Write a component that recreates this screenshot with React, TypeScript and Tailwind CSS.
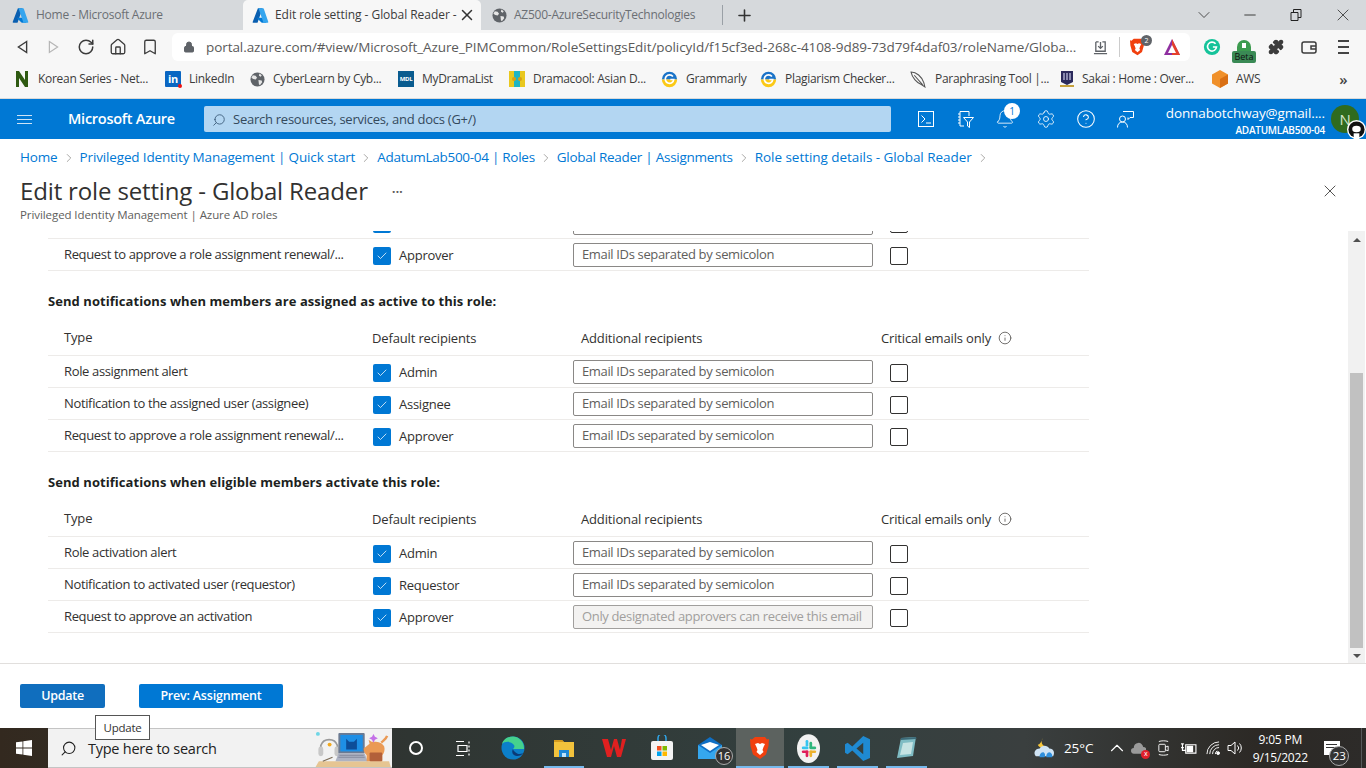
import React from "react";
import { ChevronDown, Minus, X, Plus, RotateCw, Home, Bookmark, Lock, Search, Bell, Settings, HelpCircle, Puzzle, ChevronRight, ChevronUp, Check, Info } from "lucide-react";

const Azure = () => (
  <svg viewBox="0 0 96 96" className="w-[17px] h-[17px] shrink-0">
    <path d="M33.34 6.54h26.04L32.35 86.64a4.15 4.15 0 0 1-3.94 2.82H8.15a4.15 4.15 0 0 1-3.93-5.48z" fill="#0a5fb0" />
    <path d="M71.17 60.26H29.88a1.91 1.91 0 0 0-1.3 3.31l26.53 24.76a4.17 4.17 0 0 0 2.85 1.13h23.38z" fill="#0078d4" />
    <path d="M66.6 9.36a4.15 4.15 0 0 0-3.93-2.82H33.65a4.15 4.15 0 0 1 3.93 2.82l25.18 74.62a4.15 4.15 0 0 1-3.93 5.48h29.02a4.15 4.15 0 0 0 3.93-5.48z" fill="#35a5ee" />
  </svg>
);
const Globe = () => (
  <svg viewBox="0 0 16 16" className="w-[15px] h-[15px] shrink-0">
    <circle cx="8" cy="8" r="7.5" fill="#5f6368" />
    <path d="M3 3.5l3 .5 1.5 2-1.5 2-2.5-.5L1.5 6zM10 1.5l2.5 2-1 1.5-2-1zM9 8.500l3.500.5.5 2-2.500 3-1-1z" fill="#e6e6e6" />
  </svg>
);
const BraveIcon = ({ s = 18 }: { s?: number }) => (
  <svg viewBox="0 0 20 24" style={{ width: s, height: s * 1.2 }} className="shrink-0">
    <path d="M5 1h10l2 2.500 2-.5-.5 7-2.500 8.500L10 23 3 18.500.5 10 0 3l2 .5z" fill="#f1400f" />
    <path d="M5 8l3-1 2 1 2-1 3 1-1.500 3-1 3 1 2L10 19l-3.500-3 1-2-1-3z" fill="#fff" />
  </svg>
);
const G = ({ c = "#15c39a" }: { c?: string }) => (
  <svg viewBox="0 0 20 20" className="w-[18px] h-[18px] shrink-0">
    <circle cx="10" cy="10" r="9" fill={c} />
    <path d="M14 6.500A5 5 0 1 0 15 10h-4" fill="none" stroke="#fff" strokeWidth="1.800" />
  </svg>
);
const GPlag = () => (
  <svg viewBox="0 0 20 20" className="w-[17px] h-[17px] shrink-0">
    <path d="M1 10a9 9 0 0 1 18 0z" fill="#1a73c8" />
    <path d="M1 10a9 9 0 0 0 18 0z" fill="#fbc916" />
    <path d="M14 6.500A5 5 0 1 0 15 10h-4" fill="none" stroke="#fff" strokeWidth="2" />
  </svg>
);

const bookmarks: [number, React.ReactNode, string][] = [
  [151, <svg viewBox="0 0 16 18" className="w-[16px] h-[18px] shrink-0"><path d="M2 1h3l6 9V1h3v16h-3L5 8v9H2z" fill="#2f5a12" /></svg>, "Korean Series - Net..."],
  [85, <div className="w-[16px] h-[16px] bg-[#0a66c2] text-white text-[11px] font-bold leading-[16px] text-center shrink-0 relative rounded-[1px]">in<span className="absolute right-[-1px] bottom-[-1px] w-[4px] h-[4px] bg-[#e11] rounded-full" /></div>, "LinkedIn"],
  [148, <Globe />, "CyberLearn by Cyb..."],
  [111, <div className="w-[16px] h-[16px] bg-[#0a5c8f] text-white text-[6px] font-bold leading-[16px] text-center shrink-0">MDL</div>, "MyDramaList"],
  [152, <svg viewBox="0 0 16 16" className="w-[16px] h-[16px] shrink-0"><rect width="16" height="16" fill="#1fb5c4" /><path d="M0 0h5v16H0zM11 0h5v16h-5z" fill="#e9c81e" /><circle cx="5" cy="8" r="2" fill="#d8a013" /><circle cx="11" cy="8" r="2" fill="#d8a013" /></svg>, "Dramacool: Asian D..."],
  [99, <GPlag />, "Grammarly"],
  [150, <GPlag />, "Plagiarism Checker..."],
  [150, <svg viewBox="0 0 16 16" className="w-[17px] h-[17px] shrink-0" fill="none" stroke="#555" strokeWidth="1"><path d="M1 1c5 0 10 4 12 10l1 4-3-2C6 11 2 6 1 1zM4 4l8 9" /></svg>, "Paraphrasing Tool |..."],
  [152, <svg viewBox="0 0 14 18" className="w-[14px] h-[18px] shrink-0"><path d="M1 1h12v11l-6 3-6-3z" fill="#2b2a5c" /><path d="M3 3h2v7H3zM6 3h2v7H6zM9 3h2v7H9z" fill="#8a8ab0" /><path d="M0 15h14v2H0z" fill="#c6a13b" /></svg>, "Sakai : Home : Over..."],
  [0, <svg viewBox="0 0 16 18" className="w-[16px] h-[18px] shrink-0"><path d="M8 0l8 4.500v9L8 18l-8-4.500v-9z" fill="#f0902a" /><path d="M8 9l8-4.500v9L8 18z" fill="#d96f14" /></svg>, "AWS"],
];

const ChkBlue = () => (
  <div className="w-[18px] h-[18px] bg-[#0078d4] rounded-[2px] flex items-center justify-center shrink-0">
    <Check className="w-[12px] h-[12px] text-white" strokeWidth={1.500} />
  </div>
);
const ChkEmpty = () => <div className="w-[18px] h-[18px] border border-[#323130] rounded-[2px] shrink-0" />;

const Row = ({ type, who, disabled, blank }: { type: string; who: string; disabled?: boolean; blank?: boolean }) => (
  <div className="w-[1041px] ml-[48px] h-[32px] pt-[2px] border-b border-[#edebe9] flex items-center text-[13px] text-[#323130] shrink-0 tracking-[-0.35px]">
    <div className="w-[325px] pl-[16px] mb-[2px] whitespace-nowrap">{type}</div>
    <div className="w-[200px] flex items-center gap-[8px]"><ChkBlue /><span className="tracking-[-0.25px]">{who}</span></div>
    <div className="w-[317px]">
      {disabled ? (
        <div className="w-[300px] h-[24px] border border-[#a19f9d] rounded-[2px] bg-[#f3f2f1] text-[#a19f9d] px-[8px] leading-[21px] mb-[1px] whitespace-nowrap">Only designated approvers can receive this email</div>
      ) : (
        <div className="w-[300px] h-[24px] border border-[#8a8886] rounded-[2px] bg-white text-[#605e5c] px-[8px] leading-[21px] mb-[1px]">{blank ? "" : "Email IDs separated by semicolon"}</div>
      )}
    </div>
    <ChkEmpty />
  </div>
);

const Section = ({ title, rows }: { title: string; rows: [string, string, boolean?][] }) => (
  <>
    <div className="ml-[48px] pt-[20px] h-[41px] text-[13px] leading-[20px] font-bold text-[#201f1e] whitespace-nowrap shrink-0 tracking-[0.06px]">{title}</div>
    <div className="ml-[48px] w-[1041px] h-[44px] border-b border-[#edebe9] flex items-end pb-[6px] text-[13px] leading-[20px] font-medium text-[#323130] shrink-0 tracking-[-0.15px]">
      <div className="w-[324px] pl-[16px] pb-[2px]">Type</div>
      <div className="w-[209px] pb-[1px]">Default recipients</div>
      <div className="w-[300px] pb-[1px]">Additional recipients</div>
      <div className="flex items-center gap-[7px] pb-[1px]">Critical emails only <Info className="w-[14px] h-[14px] text-[#605e5c]" strokeWidth={1.500} /></div>
    </div>
    {rows.map((r) => <Row key={r[0]} type={r[0]} who={r[1]} disabled={r[2]} />)}
  </>
);

const crumbs: [string, string][] = [
  ["Home", "tracking-[-0.15px]"],
  ["Privileged Identity Management | Quick start", "tracking-[-0.15px]"],
  ["AdatumLab500-04 | Roles", "tracking-[-0.28px]"],
  ["Global Reader | Assignments", "tracking-[-0.27px]"],
  ["Role setting details - Global Reader", "tracking-[-0.05px]"],
];

const TaskIcon = ({ children, w = 49, active, line }: { children: React.ReactNode; w?: number; active?: boolean; line?: boolean }) => (
  <div style={{ width: w }} className={`h-[40px] flex items-center justify-center relative shrink-0 ${active ? "bg-[#5c625f]" : ""}`}>
    {children}
    {line && <span className={`absolute bottom-0 h-[2px] bg-[#76b9ed] ${active ? "left-0 right-0" : "left-[4px] right-[4px]"}`} />}
  </div>
);

export default function App() {
  return (
    <div className="w-[1366px] h-[768px] overflow-hidden flex flex-col bg-white relative font-['Open_Sans','Noto_Sans',sans-serif] tracking-[-0.25px]">
      {/* tab strip */}
      <div className="h-[30px] bg-[#d6d9dc] flex items-center shrink-0">
        <div className="w-[243px] h-[30px] flex items-center shrink-0 pl-[12px] text-[#6b6f74]">
          <Azure />
          <span className="ml-[7px] text-[12px] whitespace-nowrap">Home - Microsoft Azure</span>
        </div>
        <div className="w-[238px] h-[30px] flex items-center shrink-0 bg-[#f7f7f7] rounded-t-[5px] pl-[9px] text-[#3c3c3c]">
          <Azure />
          <span className="ml-[6px] w-[186px] text-[12px] whitespace-nowrap overflow-hidden tracking-[-0.05px]">Edit role setting - Global Reader -</span>
          <X className="w-[18px] h-[18px] -ml-[3px] text-[#333]" strokeWidth={2} />
        </div>
        <div className="w-[241px] h-[30px] flex items-center shrink-0 pl-[11px] text-[#6b6f74]">
          <Globe />
          <span className="ml-[7px] text-[12px] whitespace-nowrap">AZ500-AzureSecurityTechnologies</span>
        </div>
        <div className="w-px h-[20px] bg-[#9aa0a6] shrink-0" />
        <Plus className="w-[19px] h-[19px] ml-[12px] text-[#333]" strokeWidth={2} />
        <div className="ml-auto flex items-center text-[#333]">
          <ChevronDown className="w-[20px] h-[20px] mr-[27px]" strokeWidth={1} />
          <Minus className="w-[18px] h-[18px] mr-[31px]" strokeWidth={1.250} />
          <svg viewBox="0 0 12 12" className="w-[12px] h-[12px] mr-[31px]" fill="none" stroke="#222" strokeWidth="1"><path d="M1 3.500h7v8H1zM3.500 3.500V.5h7.500v8H8" /></svg>
          <X className="w-[20px] h-[20px] mr-[13px]" strokeWidth={1} />
        </div>
      </div>
      {/* toolbar */}
      <div className="h-[34px] bg-[#f7f7f7] flex items-center shrink-0 relative">
        <svg viewBox="0 0 12 14" className="w-[11px] h-[14px] ml-[17px] shrink-0" fill="none" stroke="#3c3c3c" strokeWidth="1.500"><path d="M10.500 1L1.500 7l9 6z" /></svg>
        <svg viewBox="0 0 12 14" className="w-[11px] h-[14px] ml-[20px] shrink-0" fill="none" stroke="#b5b5b5" strokeWidth="1.300"><path d="M1.500 1l9 6-9 6z" /></svg>
        <RotateCw className="w-[18px] h-[18px] ml-[18px] text-[#3c3c3c] shrink-0" strokeWidth={2} />
        <Home className="w-[18px] h-[18px] ml-[14px] text-[#3c3c3c] shrink-0" strokeWidth={1.750} />
        <Bookmark className="w-[18px] h-[18px] ml-[14px] text-[#3c3c3c] shrink-0" strokeWidth={1.750} />
        <div className="ml-[13px] w-[1018px] h-[28px] bg-white rounded-[6px] flex items-center pl-[11px] shrink-0">
          <Lock className="w-[12px] h-[12px] text-[#5f6368] fill-[#5f6368] shrink-0" strokeWidth={2} />
          <span className="ml-[11px] text-[13.500px] text-[#5a5a5a] whitespace-nowrap tracking-[-0.07px]">portal.azure.com/#view/Microsoft_Azure_PIMCommon/RoleSettingsEdit/policyId/f15cf3ed-268c-4108-9d89-73d79f4daf03/roleName/Globa...</span>
          <div className="ml-auto flex items-center shrink-0">
            <svg viewBox="0 0 16 16" className="w-[15px] h-[15px] shrink-0" fill="none" stroke="#5f6368" strokeWidth="1.400"><path d="M3 2h3M10 2h3v10H3V2M8 2v7M5.500 6.500L8 9l2.500-2.500M1 14.500h14" /></svg>
            <span className="w-px h-[20px] bg-[#ccc] ml-[11px]" />
            <div className="ml-[10px] relative"><BraveIcon s={15} /><span className="absolute top-[-3px] left-[11px] w-[11px] h-[11px] rounded-full bg-[#5f6368] text-white text-[7px] leading-[11px] text-center">2</span></div>
            <svg viewBox="0 0 18 18" className="w-[18px] h-[18px] ml-[18px] mr-[9px] shrink-0"><path d="M9 1l8 16H1z" fill="#8f2fa0" /><path d="M9 1l8 16H9z" fill="#e5402b" /><path d="M9 7l4 8H5z" fill="#fff" /></svg>
          </div>
        </div>
        <div className="ml-[13px]"><G /></div>
        <div className="ml-[14px] relative w-[18px] h-[18px] shrink-0">
          <svg viewBox="0 0 18 18" className="w-[18px] h-[18px]"><path d="M2 16V9a7 7 0 0 1 14 0v7z" fill="#3c9b4f" /><rect x="7" y="5" width="4" height="5" fill="#fff" /></svg>
          <span className="absolute top-[13px] left-[-3px] w-[24px] h-[12px] bg-[#3a8a55] text-[#111] text-[9px] leading-[12px] text-center rounded-[2px] tracking-normal">Beta</span>
        </div>
        <Puzzle className="w-[16px] h-[16px] ml-[15px] text-[#3c3c3c] fill-[#3c3c3c] shrink-0" />
        <svg viewBox="0 0 16 16" className="w-[16px] h-[16px] ml-[17px] shrink-0" fill="none" stroke="#3c3c3c" strokeWidth="1.500"><rect x="1" y="3" width="14" height="11" rx="2" /><path d="M15 7h-5v3h5" /></svg>
        <div className="ml-[21px] w-[11px] flex flex-col gap-[4px] shrink-0"><span className="h-[2px] bg-[#444]" /><span className="h-[2px] bg-[#444]" /><span className="h-[2px] bg-[#444]" /></div>
      </div>
      {/* bookmarks */}
      <div className="h-[30px] bg-[#f7f7f7] border-b border-[#dadada] flex items-center pl-[14px] pb-[4px] shrink-0 box-content">
        {bookmarks.map(([w, ic, t]) => (
          <div key={t} style={w ? { width: w } : undefined} className="flex items-center gap-[8px] text-[12px] text-[#3c3c3c] whitespace-nowrap shrink-0 tracking-[-0.3px]">
            {ic}<span>{t}</span>
          </div>
        ))}
        <span className="ml-[79px] text-[15px] text-[#444] font-semibold leading-none">»</span>
      </div>
      {/* Azure header */}
      <div className="h-[40px] bg-[#0078d4] flex items-center text-white shrink-0 relative">
        <div className="ml-[17px] w-[15px] flex flex-col gap-[3px] shrink-0"><span className="h-px bg-[#cfe4f6]" /><span className="h-px bg-[#cfe4f6]" /><span className="h-px bg-[#cfe4f6]" /></div>
        <span className="ml-[36px] w-[136px] text-[14.500px] font-semibold whitespace-nowrap">Microsoft Azure</span>
        <div className="w-[687px] h-[26px] bg-[#b3d6f2] rounded-[2px] flex items-center pl-[8px] pt-[1px] text-[#323130] text-[13px] shrink-0">
          <Search className="w-[14px] h-[14px] -scale-x-100 text-[#3a5a78]" strokeWidth={1.500} />
          <span className="ml-[7px] text-[#34495c]">Search resources, services, and docs (G+/)</span>
        </div>
        <svg viewBox="0 0 16 16" className="w-[16px] h-[16px] ml-[27px] shrink-0" fill="none" stroke="#fff" strokeWidth="1"><rect x=".5" y=".5" width="15" height="15" /><path d="M3.500 4.500L7 8l-3.500 3.500M8 12h5" /></svg>
        <svg viewBox="0 0 17 17" className="w-[17px] h-[17px] ml-[23px] shrink-0" fill="none" stroke="#fff" strokeWidth="1"><path d="M3 .5h9V5M3 .5V15h4M1 3h2M1 6h2M1 9h2M1 12h2M6.500 6.500h10l-4 4.500v5.500l-2-1.500v-4z" /></svg>
        <div className="ml-[21px] relative shrink-0">
          <Bell className="w-[20px] h-[20px]" strokeWidth={1} />
          <span className="absolute top-[-6px] left-[9px] w-[16px] h-[16px] rounded-full bg-white text-[#0078d4] text-[10px] leading-[16px] text-center">1</span>
        </div>
        <Settings className="w-[20px] h-[20px] ml-[21px] shrink-0" strokeWidth={1} />
        <HelpCircle className="w-[20px] h-[20px] ml-[20px] shrink-0" strokeWidth={1.250} />
        <svg viewBox="0 0 17 17" className="w-[17px] h-[17px] ml-[21px] shrink-0" fill="none" stroke="#fff" strokeWidth="1"><circle cx="5.500" cy="8" r="3" /><path d="M.5 16.500c0-3.500 2-5.500 5-5.500s5 2 5 5.500M6 .5h10.500v6H13l-2 2v-2" /></svg>
        <div className="ml-[27px] w-[164px] text-right shrink-0 pt-[2px]">
          <div className="text-[13.500px] leading-[18px] whitespace-nowrap tracking-[-0.1px]">donnabotchway@gmail....</div>
          <div className="text-[10px] leading-[14px] font-semibold whitespace-nowrap mt-[1px]">ADATUMLAB500-04</div>
        </div>
        <div className="ml-[6px] w-[28px] h-[28px] rounded-full bg-[#2f6b1f] text-[#d5e6cc] text-[15px] text-center leading-[28px] shrink-0">N</div>
        <svg viewBox="0 0 20 20" className="absolute right-0 bottom-0 w-[19px] h-[19px]">
          <circle cx="10" cy="10" r="10" fill="#fff" />
          <circle cx="10" cy="10" r="8.500" fill="#111" />
          <ellipse cx="10" cy="9.500" rx="4.500" ry="3.500" fill="#fff" />
          <path d="M7 14h6v6H7z" fill="#fff" />
        </svg>
      </div>
      {/* blade header */}
      <div className="h-[92px] shrink-0 relative">
        <div className="h-[37px] pl-[20px] flex items-center text-[13.500px] text-[#0078d4] whitespace-nowrap">
          {crumbs.map(([c, t]) => (
            <React.Fragment key={c}>
              <span className={t}>{c}</span>
              <ChevronRight className="w-[14px] h-[14px] text-[#8a8886] mx-[4px]" strokeWidth={1.250} />
            </React.Fragment>
          ))}
        </div>
        <div className="h-[30px] pl-[20px] flex items-center">
          <span className="text-[24px] font-normal text-[#323130] leading-[30px] whitespace-nowrap tracking-[-0.15px]">Edit role setting - Global Reader</span>
          <span className="ml-[24px] mt-[2px] text-[#605e5c] text-[14px] font-semibold leading-[12px]">···</span>
          <X className="absolute right-[26px] top-[42px] w-[20px] h-[20px] text-[#323130]" strokeWidth={1} />
        </div>
        <div className="pl-[20px] mt-[1px] text-[11.500px] leading-[16px] text-[#605e5c] whitespace-nowrap tracking-[-0.08px]">Privileged Identity Management | Azure AD roles</div>
      </div>
      {/* scrolling content */}
      <div className="h-[432px] flex overflow-hidden shrink-0 relative">
        <div className="flex-1 flex flex-col overflow-hidden min-w-0">
          <div className="-mt-[24px] flex flex-col">
            <Row type="" who="" blank />
            <Row type="Request to approve a role assignment renewal/..." who="Approver" />
            <Section
              title="Send notifications when members are assigned as active to this role:"
              rows={[["Role assignment alert", "Admin"], ["Notification to the assigned user (assignee)", "Assignee"], ["Request to approve a role assignment renewal/...", "Approver"]]}
            />
            <Section
              title="Send notifications when eligible members activate this role:"
              rows={[["Role activation alert", "Admin"], ["Notification to activated user (requestor)", "Requestor"], ["Request to approve an activation", "Approver", true]]}
            />
          </div>
        </div>
        <div className="w-[17px] mr-px bg-[#f1f1f1] flex flex-col items-center shrink-0">
          <div className="h-[18px] flex items-center justify-center"><div className="w-0 h-0 border-x-[4px] border-x-transparent border-b-[4px] border-b-[#505050]" /></div>
          <div className="w-[13px] h-[275px] mt-[124px] bg-[#c1c1c1]" />
          <div className="mt-auto h-[15px] flex items-center justify-center"><div className="w-0 h-0 border-x-[4px] border-x-transparent border-t-[4px] border-t-[#505050]" /></div>
        </div>
      </div>
      {/* footer */}
      <div className="h-[65px] border-t border-[#e1dfdd] flex items-start pt-[20px] pl-[20px] gap-[34px] shrink-0">
        <button className="w-[85px] h-[24px] bg-[#106ebe] text-white text-[12.500px] font-semibold rounded-[2px]">Update</button>
        <button className="w-[144px] h-[24px] bg-[#0078d4] text-white text-[12.500px] font-semibold rounded-[2px] tracking-[-0.2px]">Prev: Assignment</button>
      </div>
      {/* taskbar */}
      <div className="h-[40px] flex items-center shrink-0 text-white relative bg-[linear-gradient(90deg,#33291f_0%,#2f3532_30%,#33403f_60%,#3a3f3f_75%,#2c2925_92%,#2d2b29_100%)]">
        <div className="w-[48px] h-[40px] flex items-center justify-center shrink-0">
          <svg viewBox="0 0 16 16" className="w-[16px] h-[16px]" fill="#fff"><path d="M0 2.300l6.500-.9v6.200H0zM7.300 1.300L16 0v7.600H7.300zM0 8.400h6.500v6.200L0 13.700zM7.300 8.400H16V16l-8.700-1.200z" /></svg>
        </div>
        <div className="w-[344px] h-[40px] bg-[#f2f2f2] border-y border-[#c4c4c4] flex items-center pl-[12px] relative shrink-0 overflow-hidden">
          <Search className="w-[17px] h-[17px] -scale-x-100 text-[#222]" strokeWidth={1.500} />
          <span className="ml-[11px] pt-[1px] text-[14.500px] text-[#222] whitespace-nowrap tracking-[-0.25px]">Type here to search</span>
          <svg viewBox="0 0 78 40" className="absolute right-0 top-0 w-[78px] h-[39px]">
            <path d="M4 33h72l2 7H0z" fill="#e6c592" />
            <circle cx="3" cy="5" r="2" fill="#6fd6e6" />
            <path d="M6 24v-7a9 9 0 0 1 17 0v7" fill="none" stroke="#9a9a9a" strokeWidth="1.800" />
            <rect x="3.500" y="18" width="5" height="10" rx="2.500" fill="#c8c8c8" />
            <rect x="20" y="18" width="5" height="10" rx="2.500" fill="#c8c8c8" />
            <circle cx="15" cy="16" r="2" fill="#f2a91e" />
            <path d="M8 33l10-4" stroke="#7a6a55" strokeWidth="1.200" />
            <rect x="24" y="4" width="27" height="21" rx="1" fill="#6b7a92" />
            <rect x="26" y="6" width="23" height="17" fill="#1e8fe6" />
            <path d="M32 21V10l3 3h5l3-3v11z" fill="#0d4d99" />
            <path d="M24 25h27l3 8H21z" fill="#adb2c2" />
            <path d="M25 27h25M24 29h27" stroke="#7b8094" strokeWidth=".8" />
            <path d="M50 20l6-5-1-4 3 2h3c4 0 8 1 10 5 1 3 0 7-2 9v6H53v-6c-2-2-3-4-3-7z" fill="#ea9a55" />
            <path d="M68 14c3-3 5-4 6-7" fill="none" stroke="#ea9a55" strokeWidth="2.500" />
            <path d="M60 5l1.500 3 3 1.500-3 1.500L60 14l-1.500-3-3-1.500 3-1.500z" fill="#c470e8" />
            <rect x="56" y="24" width="13" height="9" rx="1" fill="#b2603a" />
          </svg>
        </div>
        <TaskIcon w={48}><span className="w-[14px] h-[14px] rounded-full border-[2.500px] border-white" /></TaskIcon>
        <TaskIcon w={46}><svg viewBox="0 0 16 16" className="w-[16px] h-[17px]" fill="none" stroke="#fff" strokeWidth="1.200"><path d="M1 1h8M1 15h8M3 5h9v6H3zM14 1v2M14 5v2M14 9v2M14 13v2" /></svg></TaskIcon>
        <TaskIcon w={54}><svg viewBox="0 0 24 24" className="w-[24px] h-[24px]"><circle cx="12" cy="12" r="11.500" fill="#0c7fc9" /><path d="M23 12C23 5 17 .5 12 .5 6 .5 2 4 1 8c3-3 9-3 12 1 1 2 0 3-1 4h11z" fill="#45d18d" /><path d="M12 13c-2 3 0 7 4 7 3 0 5-1 6-3-3 2-6 1-8-1-1-1-2-2-2-3z" fill="#0b3a77" /></svg></TaskIcon>
        <TaskIcon w={48} line><svg viewBox="0 0 22 22" className="w-[22px] h-[22px]"><path d="M1 3h8l2 2h10v15H1z" fill="#f2c23c" /><path d="M1 3h8l2 2H1z" fill="#d49a1e" /><rect x="6" y="13" width="10" height="7" fill="#1f88d8" /><rect x="9" y="16" width="4" height="4" fill="#bfe3fb" /></svg></TaskIcon>
        <TaskIcon w={52}><svg viewBox="0 0 24 20" className="w-[24px] h-[20px]"><path d="M0 1h6l3 11 3-11h3l3 11 2-11h4l-5 18h-4l-3-11-3 11H5z" fill="#e02020" /></svg></TaskIcon>
        <TaskIcon w={44}><svg viewBox="0 0 22 26" className="w-[22px] h-[26px]"><path d="M7 6V3a4 4 0 0 1 8 0v3" fill="none" stroke="#2fa5e8" strokeWidth="1.500" /><rect x="0" y="6" width="22" height="19" rx="2" fill="#f4f4f4" /><rect x="6" y="11" width="4.500" height="4.500" fill="#f25022" /><rect x="11.500" y="11" width="4.500" height="4.500" fill="#7fba00" /><rect x="6" y="16.500" width="4.500" height="4.500" fill="#00a4ef" /><rect x="11.500" y="16.500" width="4.500" height="4.500" fill="#ffb900" /></svg></TaskIcon>
        <TaskIcon w={52}>
          <svg viewBox="0 0 24 22" className="w-[24px] h-[22px]"><path d="M0 8l12-8 12 8v14H0z" fill="#0f6fc4" /><path d="M0 8l12 8 12-8v14H0z" fill="#35a7ee" /><path d="M3 8l9 6 9-6-9-3z" fill="#fff" /></svg>
          <span className="absolute left-[31px] top-[19px] w-[18px] h-[18px] rounded-full bg-[#333] border border-[#aaa] text-[11px] text-center leading-[16px] tracking-normal">16</span>
        </TaskIcon>
        <TaskIcon w={48} active line><BraveIcon s={20} /></TaskIcon>
        <TaskIcon w={49} line><svg viewBox="0 0 24 30" className="w-[23px] h-[29px]"><ellipse cx="12" cy="15" rx="12" ry="15" fill="#f2f2f2" /><rect x="9" y="6" width="2.800" height="7" rx="1.400" fill="#36c5f0" /><rect x="5" y="13" width="7" height="2.800" rx="1.400" fill="#36c5f0" /><rect x="13" y="8" width="2.800" height="7" rx="1.400" fill="#2eb67d" /><rect x="13" y="13" width="7" height="2.800" rx="1.400" fill="#2eb67d" /><rect x="5" y="17" width="7" height="2.800" rx="1.400" fill="#e01e5a" /><rect x="9" y="17" width="2.800" height="7" rx="1.400" fill="#e01e5a" /><rect x="13" y="17" width="7" height="2.800" rx="1.400" fill="#ecb22e" /><rect x="13" y="17" width="2.800" height="7" rx="1.400" fill="#ecb22e" /></svg></TaskIcon>
        <TaskIcon w={49} line><svg viewBox="0 0 24 24" className="w-[25px] h-[25px]"><path d="M17.500 0L24 3v18l-6.500 3L7 14l-4.500 3.500L0 16V8l2.500-1.500L7 10zM17.500 6.500L11 12l6.500 5.500z" fill="#1f8ad2" /></svg></TaskIcon>
        <TaskIcon w={49} line><svg viewBox="0 0 24 24" className="w-[24px] h-[24px]"><path d="M6 2l15-1-3 19-16 2z" fill="#7fbcc4" /><path d="M6 2l15-1 .5 2-15.500 1z" fill="#3c6a78" /><path d="M8 7l10-1-2 12-11 1z" fill="#c6e3e3" /></svg></TaskIcon>
        <svg viewBox="0 0 24 24" className="w-[23px] h-[23px] ml-[102px] shrink-0"><path d="M10 1c-2 4-1 8 4 9-3 2-8 1-9-2 2 0 4-3 5-7z" fill="#f6c63a" /><path d="M3 20c-3-3-1-8 4-8 2-4 8-4 10 0 5 0 6 5 4 8z" fill="#cfe3f4" /><path d="M7 21a4 4 0 0 1 4-5 4 4 0 0 1 1 5zM14 21a4 4 0 0 1 3-5 4 4 0 0 1 3 5z" fill="#2f8fdc" /></svg>
        <span className="ml-[8px] text-[13.500px] tracking-[-0.1px] shrink-0">25°C</span>
        <ChevronUp className="w-[22px] h-[22px] ml-[13px] shrink-0" strokeWidth={1.250} />
        <div className="ml-[3px] w-[15px] h-[13px] relative shrink-0">
          <svg viewBox="0 0 16 13" className="w-[15px] h-[13px]"><path d="M3 12a3 3 0 0 1 0-6 5 5 0 0 1 10-1 3.500 3.500 0 0 1 0 7z" fill="#9a9a9a" /></svg>
          <span className="absolute right-[-4px] bottom-[-4px] w-[9px] h-[9px] rounded-full bg-[#e0202a] text-white text-[7px] leading-[8px] text-center tracking-normal">x</span>
        </div>
        <svg viewBox="0 0 14 20" className="w-[13px] h-[20px] ml-[11px] shrink-0" fill="none" stroke="#fff" strokeWidth="1"><path d="M2 3c3-1 7-1 10 0M2 17c3 1 7 1 10 0" /><rect x="2" y="6" width="7" height="8" rx="1" /><path d="M9 9l3-1v5l-3-1" /></svg>
        <svg viewBox="0 0 18 14" className="w-[17px] h-[13px] ml-[10px] shrink-0" fill="none" stroke="#fff" strokeWidth="1.200"><path d="M6 3h11v9H6zM1 2h3M1 6h3M2.500 2v4M2.500 6v3h3" /><rect x="7" y="4" width="7" height="7" fill="#fff" stroke="none" /></svg>
        <svg viewBox="0 0 15 15" className="w-[14px] h-[14px] ml-[9px] shrink-0" fill="none" stroke="#fff" strokeWidth="1"><path d="M1 14A13 13 0 0 1 14 1M4 14A10 10 0 0 1 14 4M7 14a7 7 0 0 1 7-7M10 14a4 4 0 0 1 2-3.500" /><circle cx="13" cy="13" r="1.500" fill="#fff" /></svg>
        <svg viewBox="0 0 16 16" className="w-[16px] h-[16px] ml-[7px] shrink-0" fill="none" stroke="#fff" strokeWidth="1"><path d="M1 5.500h3L8 2v12L4 10.500H1zM10.500 5.500a3.500 3.500 0 0 1 0 5M12.500 3.500a6.500 6.500 0 0 1 0 9" /></svg>
        <div className="ml-[5px] w-[64px] pt-[1px] text-center text-[12px] leading-[18px] shrink-0 tracking-[-0.2px]">
          <div>9:05 PM</div>
          <div>9/15/2022</div>
        </div>
        <div className="ml-[12px] mb-[1px] relative w-[16px] h-[14px] shrink-0 bg-white">
          <span className="absolute left-[2px] top-[3px] w-[11px] h-px bg-[#333]" /><span className="absolute left-[2px] top-[6px] w-[11px] h-px bg-[#333]" />
          <span className="absolute left-[5px] top-[5px] w-[20px] h-[20px] rounded-full bg-[#333] border border-[#aaa] text-[11.500px] text-center leading-[18px] tracking-normal">23</span>
        </div>
        <span className="absolute right-[4px] top-0 bottom-0 w-px bg-[#55595a]" />
      </div>
      {/* tooltip over the taskbar */}
      <div className="absolute left-[95px] top-[715px] w-[55px] h-[25px] bg-white border border-[#555] text-[11.500px] leading-[23px] text-center text-[#333]">Update</div>
    </div>
  );
}
